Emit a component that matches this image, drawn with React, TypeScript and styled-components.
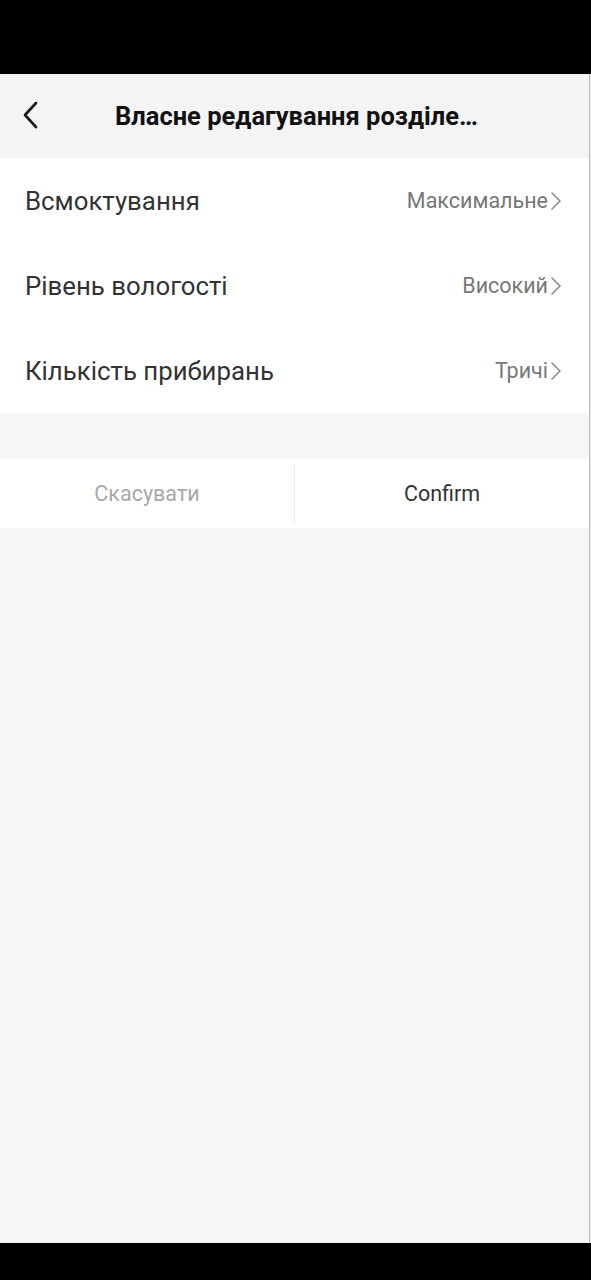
import styled, { createGlobalStyle } from "styled-components";

const GlobalStyle = createGlobalStyle`
  html, body {
    margin: 0;
    padding: 0;
    background: #000;
  }
  body {
    font-family: Roboto, "Noto Sans", "Liberation Sans", sans-serif;
  }
`;

const rows = [
  { label: "Всмоктування", value: "Максимальне" },
  { label: "Рівень вологості", value: "Високий" },
  { label: "Кількість прибирань", value: "Тричі" },
];

export default function App() {
  return (
    <>
      <GlobalStyle />
      <Screen>
        <StatusBar />
        <Page>
          <Header>
            <BackButton aria-label="back">
              <svg width="16" height="28" viewBox="0 0 16 28" fill="none">
                <path
                  d="M14 2 L3 14 L14 26"
                  stroke="#1a1a1a"
                  strokeWidth="2.6"
                  strokeLinecap="round"
                  strokeLinejoin="round"
                />
              </svg>
            </BackButton>
            <Title>Власне редагування розділе…</Title>
          </Header>

          <List>
            {rows.map((row) => (
              <Row key={row.label}>
                <RowLabel>{row.label}</RowLabel>
                <RowValue>
                  {row.value}
                  <svg width="12" height="20" viewBox="0 0 12 20" fill="none">
                    <path
                      d="M2 2 L10 10 L2 18"
                      stroke="#8a8a8a"
                      strokeWidth="1.6"
                      strokeLinecap="round"
                      strokeLinejoin="round"
                    />
                  </svg>
                </RowValue>
              </Row>
            ))}
          </List>

          <Actions>
            <ActionButton muted>Скасувати</ActionButton>
            <Divider />
            <ActionButton>Confirm</ActionButton>
          </Actions>
        </Page>
        <NavBar />
      </Screen>
    </>
  );
}

const Screen = styled.div`
  width: 591px;
  height: 1280px;
  display: flex;
  flex-direction: column;
  background: #000;
`;

const StatusBar = styled.div`
  height: 74px;
  flex-shrink: 0;
  background: #000;
`;

const NavBar = styled.div`
  height: 37px;
  flex-shrink: 0;
  background: #000;
`;

const Page = styled.div`
  flex: 1;
  display: flex;
  flex-direction: column;
  background: #f7f7f7;
  box-shadow: inset -1px 0 0 #efefef, inset -2px 0 0 #b8b8b8;
`;

const Header = styled.header`
  height: 84px;
  display: flex;
  align-items: center;
  background: #f4f4f4;
  padding: 0 22px;
  margin-right: 2px;
`;

const BackButton = styled.button`
  border: none;
  background: none;
  padding: 0;
  width: 18px;
  height: 30px;
  display: flex;
  align-items: center;
  margin-top: -2px;
`;

const Title = styled.h1`
  margin: 0 0 0 75px;
  font-size: 25.5px;
  font-weight: 700;
  color: #111;
  white-space: nowrap;
`;

const List = styled.div`
  background: #fff;
  display: flex;
  flex-direction: column;
  margin-bottom: 46px;
  margin-right: 2px;
`;

const Row = styled.div`
  height: 85px;
  display: flex;
  align-items: center;
  justify-content: space-between;
  padding: 0 27px 0 25px;
`;

const RowLabel = styled.span`
  font-size: 25.8px;
  color: #333;
`;

const RowValue = styled.span`
  display: flex;
  align-items: center;
  gap: 2px;
  font-size: 21.5px;
  color: #777;

  svg {
    margin-top: 1px;
  }
`;

const Actions = styled.div`
  height: 69px;
  display: flex;
  align-items: center;
  background: #fff;
  margin-right: 2px;
`;

const ActionButton = styled.button<{ muted?: boolean }>`
  flex: 1;
  height: 100%;
  border: none;
  background: none;
  font-family: inherit;
  font-size: 21.5px;
  color: ${({ muted }) => (muted ? "#a8a8a8" : "#333")};
`;

const Divider = styled.div`
  width: 1px;
  height: 61px;
  background: #ececec;
`;
